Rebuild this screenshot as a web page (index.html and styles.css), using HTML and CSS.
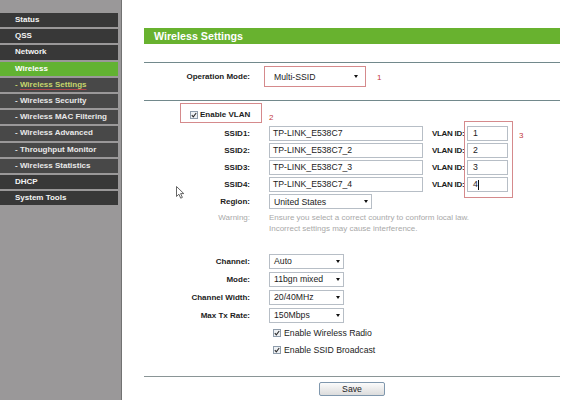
FILE: index.html
```html
<!DOCTYPE html>
<html>
<head>
<meta charset="utf-8">
<link rel="stylesheet" href="styles.css">
</head>
<body>
<div class="page">
  <nav class="side">
    <div class="menu">
      <div class="item">Status</div>
      <div class="item">QSS</div>
      <div class="item">Network</div>
      <div class="item on">Wireless</div>
      <div class="item sub cur">- <span class="uline">Wireless Settings</span></div>
      <div class="item sub">- Wireless Security</div>
      <div class="item sub">- Wireless MAC Filtering</div>
      <div class="item sub">- Wireless Advanced</div>
      <div class="item sub">- Throughput Monitor</div>
      <div class="item sub">- Wireless Statistics</div>
      <div class="item">DHCP</div>
      <div class="item">System Tools</div>
    </div>
  </nav>
  <main class="main">
    <div class="title">Wireless Settings</div>
    <div class="rule"></div>
    <div class="row op-row">
      <span class="lbl">Operation Mode:</span>
      <div class="mark op-mark">
        <div class="sel plain">Multi-SSID<i class="arr"></i></div>
      </div>
      <span class="note note1">1</span>
    </div>
    <div class="rule rule2"></div>
    <div class="vlan-row">
      <div class="mark vlan-mark">
        <svg class="cb" width="8" height="8" viewBox="0 0 8 8"><rect x="0.5" y="0.5" width="7" height="7" fill="#eef1f4" stroke="#8e9cab"/><path d="M1.8 4.2 L3.3 5.8 L6.2 2" fill="none" stroke="#2b2b2b" stroke-width="1.1"/></svg>
        <span class="bold">Enable VLAN</span>
      </div>
      <span class="note note2">2</span>
    </div>
    <div class="ssids">
      <div class="row">
        <span class="lbl">SSID1:</span>
        <div class="inp fld">TP-LINK_E538C7</div>
        <span class="vlbl">VLAN ID:</span>
        <div class="inp vid">1</div>
      </div>
      <div class="row">
        <span class="lbl">SSID2:</span>
        <div class="inp fld">TP-LINK_E538C7_2</div>
        <span class="vlbl">VLAN ID:</span>
        <div class="inp vid">2</div>
      </div>
      <div class="row">
        <span class="lbl">SSID3:</span>
        <div class="inp fld">TP-LINK_E538C7_3</div>
        <span class="vlbl">VLAN ID:</span>
        <div class="inp vid">3</div>
      </div>
      <div class="row">
        <span class="lbl">SSID4:</span>
        <div class="inp fld">TP-LINK_E538C7_4</div>
        <span class="vlbl">VLAN ID:</span>
        <div class="inp vid">4<i class="caret"></i></div>
      </div>
      <div class="mark ids-mark"></div>
      <span class="note note3">3</span>
      <svg class="cursor" width="9" height="13" viewBox="0 0 9 13"><path d="M0.5 0.5 L0.5 10.5 L2.9 8.2 L4.7 12.2 L6.4 11.4 L4.6 7.6 L7.8 7.6 Z" fill="#fff" stroke="#555" stroke-width="0.9" stroke-linejoin="round"/></svg>
    </div>
    <div class="row">
      <span class="lbl">Region:</span>
      <div class="sel fld region">United States<i class="arr"></i></div>
    </div>
    <div class="warn">
      <span class="lbl wlbl">Warning:</span>
      <div class="wtext fld">Ensure you select a correct country to conform local law.<br>Incorrect settings may cause interference.</div>
    </div>
    <div class="radio-group">
      <div class="row r18">
        <span class="lbl">Channel:</span>
        <div class="sel fld small">Auto<i class="arr"></i></div>
      </div>
      <div class="row r18">
        <span class="lbl">Mode:</span>
        <div class="sel fld small">11bgn mixed<i class="arr"></i></div>
      </div>
      <div class="row r18">
        <span class="lbl">Channel Width:</span>
        <div class="sel fld small">20/40MHz<i class="arr"></i></div>
      </div>
      <div class="row r18">
        <span class="lbl">Max Tx Rate:</span>
        <div class="sel fld small">150Mbps<i class="arr"></i></div>
      </div>
    </div>
    <div class="row">
      <span class="lbl"></span>
      <div class="fld check">
        <svg class="cb" width="8" height="8" viewBox="0 0 8 8"><rect x="0.5" y="0.5" width="7" height="7" fill="#eef1f4" stroke="#8e9cab"/><path d="M1.8 4.2 L3.3 5.8 L6.2 2" fill="none" stroke="#2b2b2b" stroke-width="1.1"/></svg>
        <span>Enable Wireless Radio</span>
      </div>
    </div>
    <div class="row">
      <span class="lbl"></span>
      <div class="fld check">
        <svg class="cb" width="8" height="8" viewBox="0 0 8 8"><rect x="0.5" y="0.5" width="7" height="7" fill="#eef1f4" stroke="#8e9cab"/><path d="M1.8 4.2 L3.3 5.8 L6.2 2" fill="none" stroke="#2b2b2b" stroke-width="1.1"/></svg>
        <span>Enable SSID Broadcast</span>
      </div>
    </div>
    <div class="rule rule3"></div>
    <div class="btn">Save</div>
  </main>
</div>
</body>
</html>
```

FILE: styles.css
```css
html, body {
  margin: 0;
  padding: 0;
  background: #fff;
  font-family: "Liberation Sans", Arial, sans-serif;
}

.page {
  display: flex;
  height: 400px;
  overflow: hidden;
}

.side {
  width: 121px;
  flex: none;
  background: #9a9899;
  border-right: 1px solid #727272;
  padding-top: 13px;
}

.menu {
  width: 118px;
  display: flex;
  flex-direction: column;
  gap: 2px;
}

.item {
  height: 14.2px;
  line-height: 14.2px;
  font-size: 8px;
  font-weight: bold;
  color: #f4f4f4;
  padding-left: 15px;
  background: #383838;
  white-space: nowrap;
}

.item.sub {
  background: #484848;
  color: #e8e8e8;
}

.item.on {
  background: #62b232;
  color: #fff;
}

.item.cur {
  color: #c6d66c;
}

.uline {
  text-decoration: underline;
  text-decoration-color: #b0474a;
  text-underline-offset: 2px;
}

.main {
  width: 416px;
  padding: 28px 0 0 22px;
  color: #1c1c1c;
}

.title {
  height: 16px;
  line-height: 16px;
  background: #68b22f;
  color: #fff;
  font-size: 10.7px;
  font-weight: bold;
  padding-left: 10px;
}

.rule {
  height: 1px;
  background: #72898c;
  margin-top: 18px;
}

.rule2 {
  margin-top: 13px;
}

.rule3 {
  margin-top: 18px;
  background: #8a9596;
}

.row {
  display: flex;
  align-items: center;
  height: 17px;
}

.r18 {
  height: 18px;
}

.lbl {
  width: 106px;
  flex: none;
  text-align: right;
  font-size: 8px;
  font-weight: bold;
}

.fld {
  margin-left: 19px;
}

.op-row {
  height: 21px;
  margin-top: 3px;
}

.mark {
  border: 1px solid #d58a8c;
  box-sizing: border-box;
}

.op-mark {
  margin-left: 14px;
  width: 102px;
  height: 21px;
  padding: 2px 4px;
}

.note {
  color: #c4383c;
  font-size: 8px;
}

.note1 {
  margin-left: 11px;
  margin-top: 2px;
}

.sel {
  height: 15px;
  box-sizing: border-box;
  border: 1px solid #b7bec6;
  background: #fff;
  display: flex;
  align-items: center;
  justify-content: space-between;
  padding: 0 3px 0 4px;
  font-size: 8.7px;
  white-space: nowrap;
}

.sel.plain {
  border: none;
  width: 92px;
  padding: 0 3px 0 5px;
}

.sel.region {
  width: 103px;
}

.sel.small {
  width: 75px;
}

.arr {
  width: 0;
  height: 0;
  border-left: 2.5px solid transparent;
  border-right: 2.5px solid transparent;
  border-top: 3px solid #111;
}

.vlan-row {
  display: flex;
  align-items: center;
  height: 20px;
  margin-top: 2px;
}

.vlan-mark {
  margin-left: 36px;
  width: 82px;
  height: 20px;
  display: flex;
  align-items: center;
  gap: 2px;
  padding-left: 9px;
  padding-top: 3px;
}

.bold {
  font-weight: bold;
  font-size: 8px;
}

.note2 {
  margin-left: 7px;
  margin-top: 8px;
}

.ssids {
  position: relative;
  margin-top: 2px;
}

.inp {
  height: 15px;
  box-sizing: border-box;
  border: 1px solid #b7bec6;
  background: #fff;
  padding-left: 3px;
  font-size: 8.7px;
  line-height: 13px;
  white-space: nowrap;
  display: flex;
  align-items: center;
}

.inp.fld {
  width: 154px;
}

.vlbl {
  width: 32px;
  margin-left: 9px;
  font-size: 8px;
  font-weight: bold;
  white-space: nowrap;
  overflow: visible;
  letter-spacing: -0.3px;
}

.vid {
  margin-left: 3px;
  width: 41px;
  padding-left: 5px;
}

.caret {
  width: 1px;
  height: 10px;
  background: #111;
  margin-left: 0.5px;
}

.ids-mark {
  position: absolute;
  left: 320px;
  top: -4px;
  width: 49px;
  height: 77px;
}

.note3 {
  position: absolute;
  left: 375px;
  top: 6px;
}

.cursor {
  position: absolute;
  left: 32px;
  top: 61px;
}

.warn {
  display: flex;
  margin-top: 2px;
  color: #a9a9a9;
  font-size: 8px;
  line-height: 11px;
}

.wlbl {
  font-weight: normal;
  color: #a9a9a9;
}

.wtext {
  white-space: nowrap;
}

.radio-group {
  margin-top: 18px;
}

.check {
  display: flex;
  align-items: center;
  gap: 3px;
  padding-left: 4px;
  font-size: 8.7px;
}

.check .cb {
  flex: none;
}

.btn {
  margin: 5px 0 0 175px;
  width: 66px;
  height: 14px;
  box-sizing: border-box;
  border: 1px solid #7f97ad;
  border-radius: 2px;
  background: linear-gradient(#fbfbfb, #dcdcdc);
  font-size: 8.7px;
  text-align: center;
  line-height: 12px;
}
```
